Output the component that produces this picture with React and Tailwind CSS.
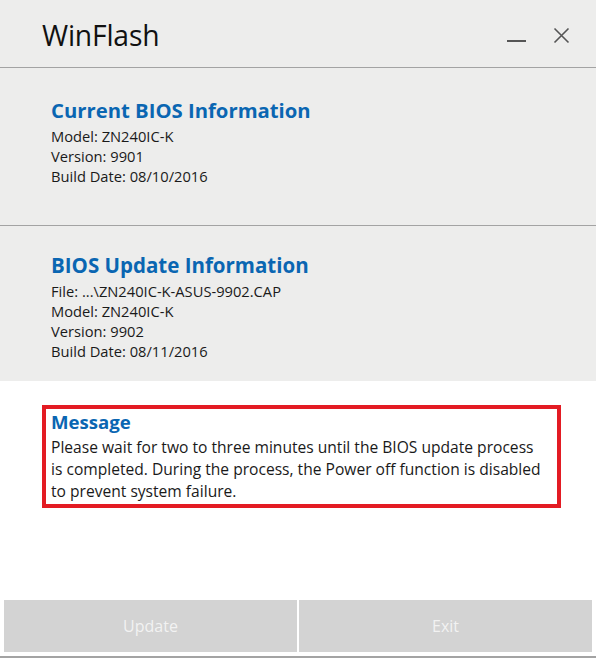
import React from "react";

export default function App() {
  const font = { fontFamily: '"Open Sans", "Noto Sans", sans-serif' };
  return (
    <div className="w-[596px] h-[658px] bg-white flex flex-col overflow-hidden" style={font}>
      <div className="bg-[#ededec]">
        <div className="h-[68px] border-b border-[#a3a3a3] flex items-start relative">
          <div className="ml-[42px] mt-[16px] text-[28.3px] leading-[38px] text-[#111] tracking-[-0.2px]">WinFlash</div>
          <div className="absolute left-[507px] top-[40px] w-[19px] h-[2px] bg-[#555]" />
          <svg className="absolute left-[553px] top-[27px]" width="17" height="17" viewBox="0 0 17 17">
            <path d="M1.5 1.5 L15.5 15.5 M15.5 1.5 L1.5 15.5" stroke="#555" strokeWidth="1.6" fill="none" />
          </svg>
        </div>
        <div className="h-[158px] border-b border-[#a3a3a3] pl-[51px] pt-[29px]">
          <div className="text-[20.3px] leading-[26px] font-bold text-[#0a66b2]">Current BIOS Information</div>
          <div className="mt-[3px] text-[14.7px] leading-[20px] text-[#1a1a1a]">
            <div>Model: ZN240IC-K</div>
            <div>Version: 9901</div>
            <div>Build Date: 08/10/2016</div>
          </div>
        </div>
        <div className="h-[155px] pl-[51px] pt-[26px]">
          <div className="text-[20.5px] leading-[26px] font-bold text-[#0a66b2]">BIOS Update Information</div>
          <div className="mt-[3px] text-[14.7px] leading-[20px] text-[#1a1a1a]">
            <div>File: ...\ZN240IC-K-ASUS-9902.CAP</div>
            <div>Model: ZN240IC-K</div>
            <div>Version: 9902</div>
            <div>Build Date: 08/11/2016</div>
          </div>
        </div>
      </div>
      <div className="flex-1 flex flex-col">
        <div className="ml-[42px] mt-[24px] w-[519px] h-[103px] border-[4px] border-[#e31b23] pl-[5px] pt-[1px]">
          <div className="text-[18.6px] leading-[24px] font-bold text-[#0a66b2]">Message</div>
          <div className="mt-[2px] text-[15.6px] leading-[22px] text-[#1a1a1a] whitespace-nowrap">
            <div>Please wait for two to three minutes until the BIOS update process</div>
            <div>is completed. During the process, the Power off function is disabled</div>
            <div>to prevent system failure.</div>
          </div>
        </div>
        <div className="mt-auto flex gap-[2px] px-[4px]">
          <div className="flex-1 h-[52px] bg-[#d3d3d3] flex items-center justify-center text-[16px] text-[#f2f2f2]">Update</div>
          <div className="flex-1 h-[52px] bg-[#d3d3d3] flex items-center justify-center text-[16px] text-[#f2f2f2]">Exit</div>
        </div>
        <div className="h-[4px]" />
        <div className="h-[2px] bg-[#a3a3a3]" />
      </div>
    </div>
  );
}
